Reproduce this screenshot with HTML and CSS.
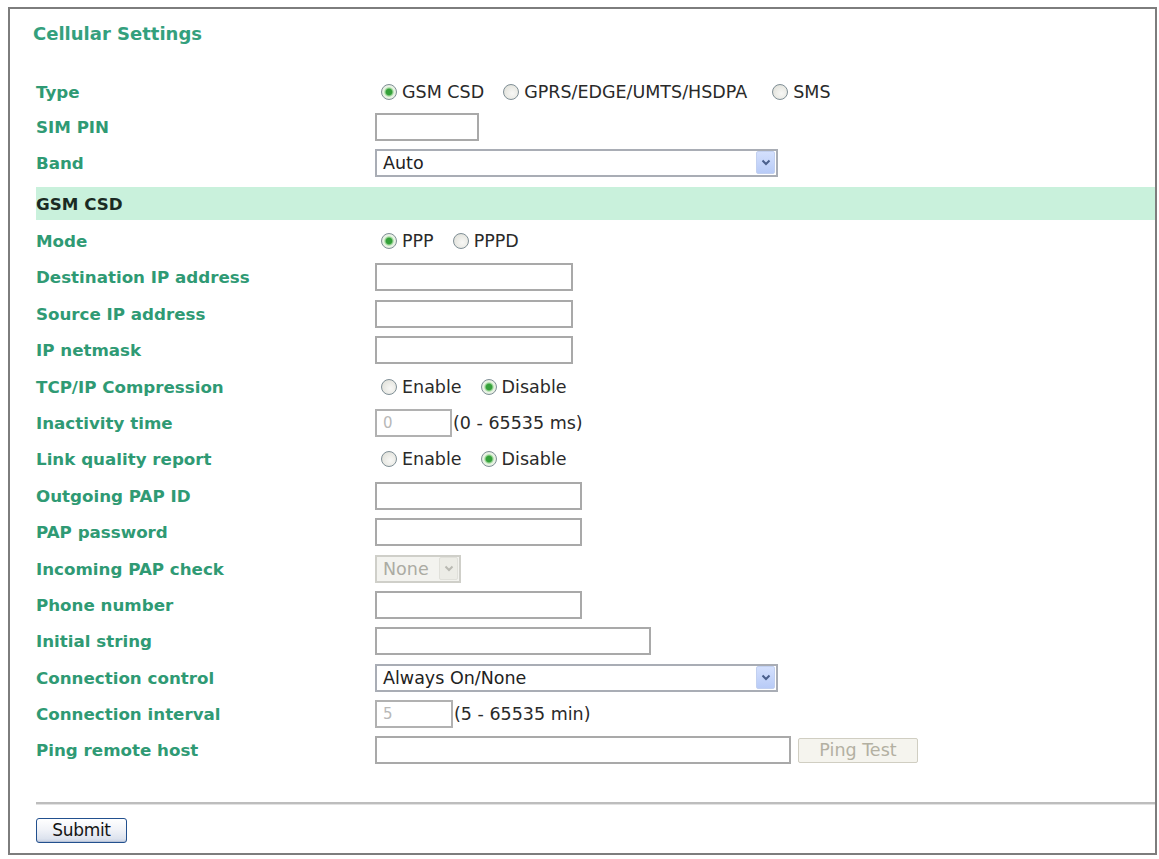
FILE: index.html
```html
<!DOCTYPE html>
<html lang="en">
<head>
<meta charset="utf-8">
<title>Cellular Settings</title>
<link rel="stylesheet" href="styles.css">
</head>
<body>
<div class="page">
  <div class="panel">
    <h1 class="title">Cellular Settings</h1>
    <div class="content">
      <div class="rows rows-top">
        <div class="row">
          <div class="label">Type</div>
          <div class="ctrl">
            <label class="opt"><span class="radio checked"></span>GSM CSD</label>
            <label class="opt"><span class="radio"></span>GPRS/EDGE/UMTS/HSDPA</label>
            <label class="opt opt-wide"><span class="radio"></span>SMS</label>
          </div>
        </div>
        <div class="row">
          <div class="label">SIM PIN</div>
          <div class="ctrl"><span class="input w-sim"></span></div>
        </div>
        <div class="row">
          <div class="label">Band</div>
          <div class="ctrl">
            <div class="select w-select"><span class="select-value">Auto</span><span class="select-arrow"><svg width="10" height="7" viewBox="0 0 10 7"><path d="M1.5 1.5 L5 5 L8.5 1.5" fill="none" stroke="#4a5f8c" stroke-width="2"/></svg></span></div>
          </div>
        </div>
      </div>

      <div class="section-bar">GSM CSD</div>

      <div class="rows rows-main">
        <div class="row">
          <div class="label">Mode</div>
          <div class="ctrl">
            <label class="opt"><span class="radio checked"></span>PPP</label>
            <label class="opt"><span class="radio"></span>PPPD</label>
          </div>
        </div>
        <div class="row">
          <div class="label">Destination IP address</div>
          <div class="ctrl"><span class="input w-ip"></span></div>
        </div>
        <div class="row">
          <div class="label">Source IP address</div>
          <div class="ctrl"><span class="input w-ip"></span></div>
        </div>
        <div class="row">
          <div class="label">IP netmask</div>
          <div class="ctrl"><span class="input w-ip"></span></div>
        </div>
        <div class="row">
          <div class="label">TCP/IP Compression</div>
          <div class="ctrl">
            <label class="opt"><span class="radio"></span>Enable</label>
            <label class="opt"><span class="radio checked"></span>Disable</label>
          </div>
        </div>
        <div class="row">
          <div class="label">Inactivity time</div>
          <div class="ctrl"><span class="input w-num dim">0</span><span class="hint">(0 - 65535 ms)</span></div>
        </div>
        <div class="row">
          <div class="label">Link quality report</div>
          <div class="ctrl">
            <label class="opt"><span class="radio"></span>Enable</label>
            <label class="opt"><span class="radio checked"></span>Disable</label>
          </div>
        </div>
        <div class="row">
          <div class="label">Outgoing PAP ID</div>
          <div class="ctrl"><span class="input w-pap"></span></div>
        </div>
        <div class="row">
          <div class="label">PAP password</div>
          <div class="ctrl"><span class="input w-pap"></span></div>
        </div>
        <div class="row">
          <div class="label">Incoming PAP check</div>
          <div class="ctrl">
            <div class="select select-disabled w-none"><span class="select-value">None</span><span class="select-arrow"><svg width="10" height="7" viewBox="0 0 10 7"><path d="M1.5 1.5 L5 5 L8.5 1.5" fill="none" stroke="#b9b9b2" stroke-width="2"/></svg></span></div>
          </div>
        </div>
        <div class="row">
          <div class="label">Phone number</div>
          <div class="ctrl"><span class="input w-pap"></span></div>
        </div>
        <div class="row">
          <div class="label">Initial string</div>
          <div class="ctrl"><span class="input w-init"></span></div>
        </div>
        <div class="row">
          <div class="label">Connection control</div>
          <div class="ctrl">
            <div class="select w-select"><span class="select-value">Always On/None</span><span class="select-arrow"><svg width="10" height="7" viewBox="0 0 10 7"><path d="M1.5 1.5 L5 5 L8.5 1.5" fill="none" stroke="#4a5f8c" stroke-width="2"/></svg></span></div>
          </div>
        </div>
        <div class="row">
          <div class="label">Connection interval</div>
          <div class="ctrl"><span class="input w-num2 dim">5</span><span class="hint">(5 - 65535 min)</span></div>
        </div>
        <div class="row">
          <div class="label">Ping remote host</div>
          <div class="ctrl"><span class="input w-ping"></span><span class="btn-disabled">Ping Test</span></div>
        </div>
      </div>

      <div class="separator"></div>
      <div class="footer"><button class="submit" type="button">Submit</button></div>
    </div>
  </div>
</div>
</body>
</html>
```

FILE: styles.css
```css
* { box-sizing: border-box; }

html, body {
  margin: 0;
  padding: 0;
  background: #ffffff;
}

.page {
  padding: 7px 2px 4px 8px;
}

.panel {
  width: 1149px;
  height: 848px;
  border: 2px solid #7d7d7d;
  background: #ffffff;
}

.title {
  margin: 14px 0 0 0;
  padding-left: 23px;
  font-family: "DejaVu Sans", Verdana, sans-serif;
  font-weight: bold;
  font-size: 18px;
  line-height: 22px;
  color: #34a07d;
}

.content {
  margin-left: 26px;
}

.rows-top {
  margin-top: 29px;
}

.rows-top .row {
  height: 35.5px;
}

.rows-main {
  margin-top: 2.8px;
}

.rows-main .row {
  height: 36.4px;
}

.row {
  display: flex;
  align-items: center;
}

.label {
  width: 339px;
  flex: none;
  font-family: "DejaVu Sans", Verdana, sans-serif;
  font-weight: bold;
  font-size: 16.7px;
  color: #2f9a74;
  white-space: nowrap;
}

.ctrl {
  display: flex;
  align-items: center;
  font-family: "DejaVu Sans", Verdana, sans-serif;
  font-size: 17.5px;
  color: #2a2a2a;
  white-space: nowrap;
}

.opt {
  display: flex;
  align-items: center;
  margin-right: 13px;
}

.opt-wide {
  margin-left: 6px;
}

.radio {
  width: 16px;
  height: 16px;
  margin: 0 5px 0 6px;
  border-radius: 50%;
  border: 1px solid #7f8f96;
  background: radial-gradient(circle at 60% 60%, #f8f8f6 0, #e6e6e0 65%, #cfcfc8 100%);
  flex: none;
}

.radio.checked {
  background: radial-gradient(circle, #34a03a 0, #34a03a 2.8px, #8fd08c 3.8px, #e8f4e4 5.2px, #e2e2dc 100%);
}

.input {
  display: inline-flex;
  align-items: center;
  height: 28px;
  padding-left: 6px;
  border: 2px solid #a9a9a9;
  background: #ffffff;
  font-size: 15px;
}

.input.dim {
  color: #b8b8b8;
  border-color: #b1b1b1;
}

.w-sim { width: 104px; }
.w-ip { width: 198px; }
.w-pap { width: 207px; }
.w-init { width: 276px; }
.w-num { width: 77px; }
.w-num2 { width: 78px; }
.w-ping { width: 416px; }
.w-select { width: 403px; }
.w-none { width: 86px; }

.hint {
  margin-left: 1px;
}

.select {
  display: flex;
  align-items: center;
  justify-content: space-between;
  height: 28px;
  border: 2px solid #a9adb5;
  background: #ffffff;
  padding: 0 1px 0 6px;
}

.select-value {
  color: #222222;
}

.select-arrow {
  width: 19px;
  height: 23px;
  display: flex;
  align-items: center;
  justify-content: center;
  background: linear-gradient(#d4e0fd, #b8cbf7);
  border: 1px solid #c2d0f0;
  border-radius: 2px;
}

.select-disabled {
  background: #f3f3ef;
  border-color: #cfcfc9;
}

.select-disabled .select-value {
  color: #ababa3;
}

.select-disabled .select-arrow {
  background: #ecece6;
  border-color: #e0e0da;
}

.btn-disabled {
  display: inline-flex;
  align-items: center;
  justify-content: center;
  width: 120px;
  height: 25px;
  margin-left: 7px;
  border: 1px solid #d0cec2;
  border-radius: 2px;
  background: #f5f4ee;
  color: #b3b0a2;
  font-size: 17.5px;
}

.section-bar {
  margin-top: 6.5px;
  height: 33px;
  display: flex;
  align-items: center;
  background: #c9f1dc;
  font-family: "DejaVu Sans", Verdana, sans-serif;
  font-weight: bold;
  font-size: 16.7px;
  color: #1a2a23;
}

.separator {
  margin-top: 33px;
  height: 3px;
  border-top: 2px solid #bdbdbd;
  border-bottom: 1px solid #e2e2e2;
}

.footer {
  margin-top: 13px;
}

.submit {
  width: 91px;
  height: 25px;
  padding: 0;
  border: 1px solid #22508e;
  border-radius: 3px;
  background: linear-gradient(#ffffff 0%, #f1f3f8 45%, #dde3ee 85%, #c9d2e3 100%);
  box-shadow: inset 0 -1px 0 #b8c3d8;
  font-family: "DejaVu Sans", Tahoma, sans-serif;
  font-size: 17px;
  letter-spacing: -0.3px;
  color: #141414;
}
```
